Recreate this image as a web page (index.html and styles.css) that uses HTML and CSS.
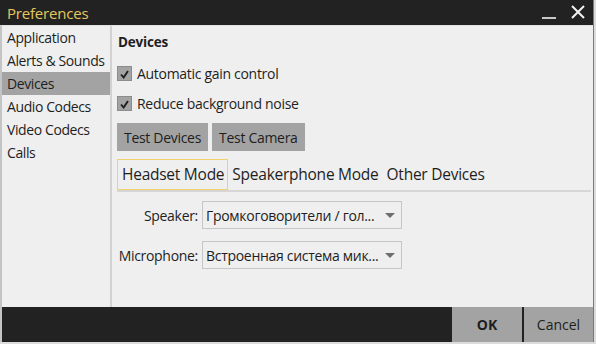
FILE: index.html
```html
<!DOCTYPE html>
<html lang="en">
<head>
    <meta charset="UTF-8">
    <meta name="viewport" content="width=device-width, initial-scale=1.0">
    <title>Preferences</title>
    <link rel="stylesheet" href="styles.css">
</head>
<body>
    <div class="window">
        <div class="titlebar">
            <span class="title">Preferences</span>
            <div class="win-buttons">
                <span class="win-btn min"></span>
                <span class="win-btn close">
                    <svg width="14" height="14" viewBox="0 0 14 14">
                        <path d="M1 1 L13 13 M13 1 L1 13" stroke="#f2f2f2" stroke-width="2" fill="none"/>
                    </svg>
                </span>
            </div>
        </div>

        <div class="main">
            <ul class="sidebar">
                <li>Application</li>
                <li>Alerts &amp; Sounds</li>
                <li class="active">Devices</li>
                <li>Audio Codecs</li>
                <li>Video Codecs</li>
                <li>Calls</li>
            </ul>

            <div class="content">
                <h2>Devices</h2>

                <label class="check">
                    <span class="box">
                        <svg width="15" height="15" viewBox="0 0 15 15">
                            <path d="M3.5 7.5 L6.5 11 L11.5 3.5" stroke="#1e1e1e" stroke-width="2.2" fill="none"/>
                        </svg>
                    </span>
                    Automatic gain control
                </label>
                <label class="check">
                    <span class="box">
                        <svg width="15" height="15" viewBox="0 0 15 15">
                            <path d="M3.5 7.5 L6.5 11 L11.5 3.5" stroke="#1e1e1e" stroke-width="2.2" fill="none"/>
                        </svg>
                    </span>
                    Reduce background noise
                </label>

                <div class="buttons">
                    <button class="btn">Test Devices</button>
                    <button class="btn">Test Camera</button>
                </div>

                <div class="tabs">
                    <span class="tab selected">Headset Mode</span>
                    <span class="tab">Speakerphone Mode</span>
                    <span class="tab">Other Devices</span>
                </div>

                <div class="fields">
                    <span class="field-label">Speaker:</span>
                    <div class="select">
                        <span>Громкоговорители / гол...</span>
                        <span class="arrow"></span>
                    </div>
                    <span class="field-label">Microphone:</span>
                    <div class="select">
                        <span>Встроенная система мик...</span>
                        <span class="arrow"></span>
                    </div>
                </div>
            </div>
        </div>

        <div class="footer">
            <button class="footer-btn ok">OK</button>
            <button class="footer-btn cancel">Cancel</button>
        </div>
    </div>
</body>
</html>
```

FILE: styles.css
```css
body {
    margin: 0;
    background: #dcdcdc;
    font-family: "Open Sans", "Noto Sans", sans-serif;
    color: #1e1e1e;
}
.window {
    width: 593px;
    height: 342px;
    display: flex;
    flex-direction: column;
    border-right: 1px solid #7a7a7a;
}
.titlebar {
    height: 25px;
    background: #222222;
    display: flex;
    align-items: center;
    justify-content: space-between;
    flex-shrink: 0;
}
.title {
    color: #e6c75f;
    font-size: 15px;
    padding-left: 7px;
    letter-spacing: -0.2px;
}
.win-buttons {
    display: flex;
    align-items: center;
    height: 100%;
}
.win-btn {
    display: flex;
    align-items: center;
    justify-content: center;
}
.win-btn.min {
    width: 14px;
    height: 2px;
    background: #c8c8c8;
    margin-top: 10px;
    margin-right: 15px;
}
.win-btn.close {
    width: 14px;
    height: 14px;
    margin-right: 8px;
    margin-top: -2px;
}
.main {
    flex: 1;
    display: flex;
    background: #efefef;
    border-top: 1px solid #e2e2e2;
    border-left: 2px solid #c4c4c4;
}
.sidebar {
    list-style: none;
    margin: 0;
    padding: 0;
    width: 108px;
    border-right: 2px solid #d2d2d2;
    font-size: 14px;
    letter-spacing: -0.4px;
}
.sidebar li {
    height: 23px;
    line-height: 23px;
    padding-left: 5px;
    white-space: nowrap;
}
.sidebar li.active {
    background: #a3a3a3;
}
.content {
    flex: 1;
    padding-left: 5px;
    font-size: 14px;
    letter-spacing: -0.3px;
}
h2 {
    font-size: 13.5px;
    font-weight: bold;
    margin: 7px 0 7px 1px;
    letter-spacing: -0.2px;
}
.check {
    display: flex;
    align-items: center;
    gap: 5px;
    height: 30px;
}
.box {
    width: 15px;
    height: 15px;
    background: #a3a3a3;
    box-sizing: border-box;
    border: 1px solid #8c8c8c;
    display: flex;
}
.buttons {
    display: flex;
    gap: 4px;
    margin-top: 5px;
}
.btn {
    background: #a3a3a3;
    border: none;
    font-family: inherit;
    font-size: 14px;
    letter-spacing: -0.3px;
    color: #1e1e1e;
    height: 28px;
    padding: 0 7px;
}
.tabs {
    display: flex;
    margin-top: 8px;
    border-bottom: 2px solid #d6d6d6;
    margin-right: 2px;
    font-size: 15.5px;
    letter-spacing: -0.25px;
}
.tab {
    height: 29px;
    line-height: 29px;
    padding: 0 3px;
    border: 1px solid transparent;
}
.tab.selected {
    border-color: #efd36a;
    padding: 0 3px 0 4px;
}
.fields {
    display: grid;
    grid-template-columns: 81px 200px;
    column-gap: 4px;
    row-gap: 12px;
    align-items: center;
    margin-top: 9px;
}
.field-label {
    text-align: right;
}
.select {
    height: 28px;
    box-sizing: border-box;
    border: 1px solid #c6c6c6;
    display: flex;
    align-items: center;
    justify-content: space-between;
    padding: 0 6px 0 3px;
}
.arrow {
    width: 0;
    height: 0;
    border-left: 5px solid transparent;
    border-right: 5px solid transparent;
    border-top: 5px solid #6e6e6e;
}
.footer {
    height: 35px;
    background: #222222;
    display: flex;
    justify-content: flex-end;
    flex-shrink: 0;
    border-left: 2px solid #c4c4c4;
}
.footer-btn {
    width: 70px;
    background: #a3a3a3;
    border: none;
    font-family: inherit;
    font-size: 14px;
    color: #1e1e1e;
    margin-left: 2px;
}
.footer-btn.cancel {
    width: 69px;
}
.footer-btn.ok {
    font-weight: bold;
}
```
